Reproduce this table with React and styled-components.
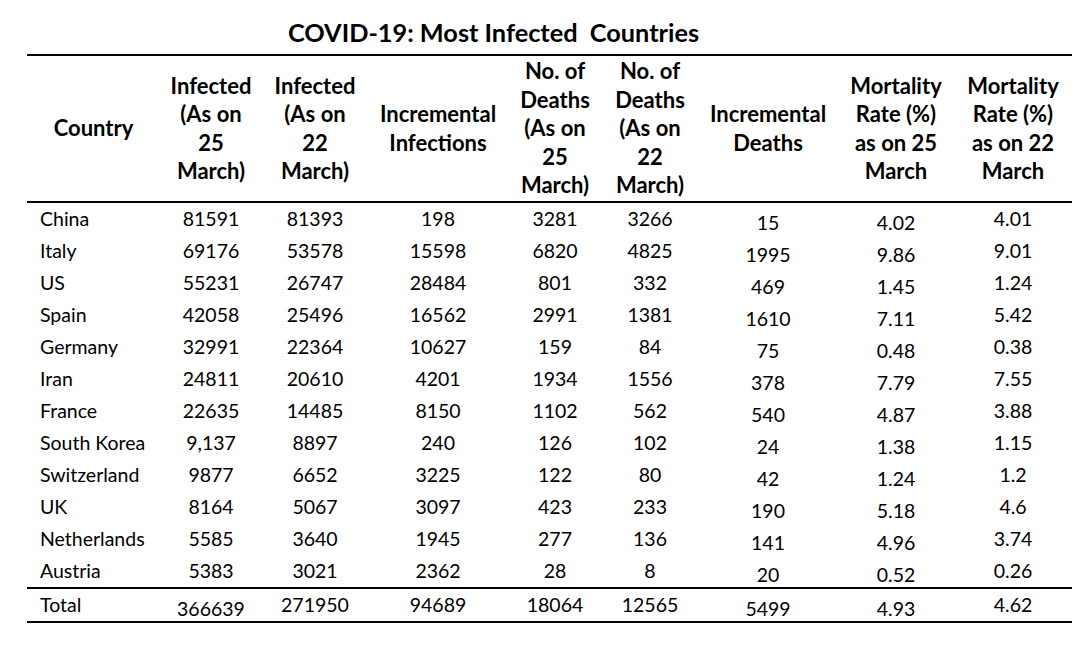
import React from "react";
import styled, { createGlobalStyle } from "styled-components";

const Global = createGlobalStyle`
  html, body { margin: 0; padding: 0; background: #ffffff; }
  body { font-family: Lato, "Open Sans", sans-serif; color: #000; }
`;

const Page = styled.div`
  width: 1078px;
  height: 646px;
  box-sizing: border-box;
  padding: 16px 6px 0 27px;
  display: flex;
  flex-direction: column;
`;

const Title = styled.h1`
  margin: 0;
  padding-right: 112px;
  height: 38px;
  text-align: center;
  font-size: 25.3px;
  font-weight: 700;
  line-height: 32px;
  white-space: pre;
`;

const Table = styled.table`
  width: 1045px;
  border-collapse: collapse;
  table-layout: fixed;
`;

const HeadRow = styled.tr`
  border-top: 2px solid #000;
  border-bottom: 2px solid #000;
`;

const Th = styled.th`
  height: 145px;
  padding: 0;
  vertical-align: middle;
  text-align: center;
  font-size: 22px;
  font-weight: 700;
  line-height: 28.5px;
`;

const Row = styled.tr`
  height: 32px;
`;

const TotalRow = styled.tr`
  height: 29px;
  border-top: 2px solid #000;
  border-bottom: 2px solid #000;
`;

const Td = styled.td`
  padding: ${(p) => (p.$low ? "8px 0 0" : "0")};
  text-align: ${(p) => (p.$left ? "left" : "center")};
  padding-left: ${(p) => (p.$left ? "13px" : "0")};
  vertical-align: middle;
  font-size: 19.5px;
  line-height: 24px;
  white-space: nowrap;
`;

const widths = [133, 102, 106, 140, 94, 96, 140, 116, 118];

const headers = [
  ["Country"],
  ["Infected", "(As on", "25", "March)"],
  ["Infected", "(As on", "22", "March)"],
  ["Incremental", "Infections"],
  ["No. of", "Deaths", "(As on", "25", "March)"],
  ["No. of", "Deaths", "(As on", "22", "March)"],
  ["Incremental", "Deaths"],
  ["Mortality", "Rate (%)", "as on 25", "March"],
  ["Mortality", "Rate (%)", "as on 22", "March"],
];

const rows = [
  ["China", "81591", "81393", "198", "3281", "3266", "15", "4.02", "4.01"],
  ["Italy", "69176", "53578", "15598", "6820", "4825", "1995", "9.86", "9.01"],
  ["US", "55231", "26747", "28484", "801", "332", "469", "1.45", "1.24"],
  ["Spain", "42058", "25496", "16562", "2991", "1381", "1610", "7.11", "5.42"],
  ["Germany", "32991", "22364", "10627", "159", "84", "75", "0.48", "0.38"],
  ["Iran", "24811", "20610", "4201", "1934", "1556", "378", "7.79", "7.55"],
  ["France", "22635", "14485", "8150", "1102", "562", "540", "4.87", "3.88"],
  ["South Korea", "9,137", "8897", "240", "126", "102", "24", "1.38", "1.15"],
  ["Switzerland", "9877", "6652", "3225", "122", "80", "42", "1.24", "1.2"],
  ["UK", "8164", "5067", "3097", "423", "233", "190", "5.18", "4.6"],
  ["Netherlands", "5585", "3640", "1945", "277", "136", "141", "4.96", "3.74"],
  ["Austria", "5383", "3021", "2362", "28", "8", "20", "0.52", "0.26"],
];

const total = ["Total", "366639", "271950", "94689", "18064", "12565", "5499", "4.93", "4.62"];

const lowCols = [6, 7];
const totalLow = [1, 6, 7];

export default function App() {
  return (
    <>
      <Global />
      <Page>
        <Title>{"COVID-19: Most Infected  Countries"}</Title>
        <Table>
          <colgroup>
            {widths.map((w, i) => (
              <col key={i} style={{ width: w }} />
            ))}
          </colgroup>
          <thead>
            <HeadRow>
              {headers.map((lines, i) => (
                <Th key={i}>
                  {lines.map((l, j) => (
                    <div key={j}>{l}</div>
                  ))}
                </Th>
              ))}
            </HeadRow>
          </thead>
          <tbody>
            {rows.map((r, i) => (
              <Row key={i}>
                {r.map((c, j) => (
                  <Td key={j} $left={j === 0} $low={lowCols.includes(j)}>
                    {c}
                  </Td>
                ))}
              </Row>
            ))}
            <TotalRow>
              {total.map((c, j) => (
                <Td key={j} $left={j === 0} $low={totalLow.includes(j)}>
                  {c}
                </Td>
              ))}
            </TotalRow>
          </tbody>
        </Table>
      </Page>
    </>
  );
}
